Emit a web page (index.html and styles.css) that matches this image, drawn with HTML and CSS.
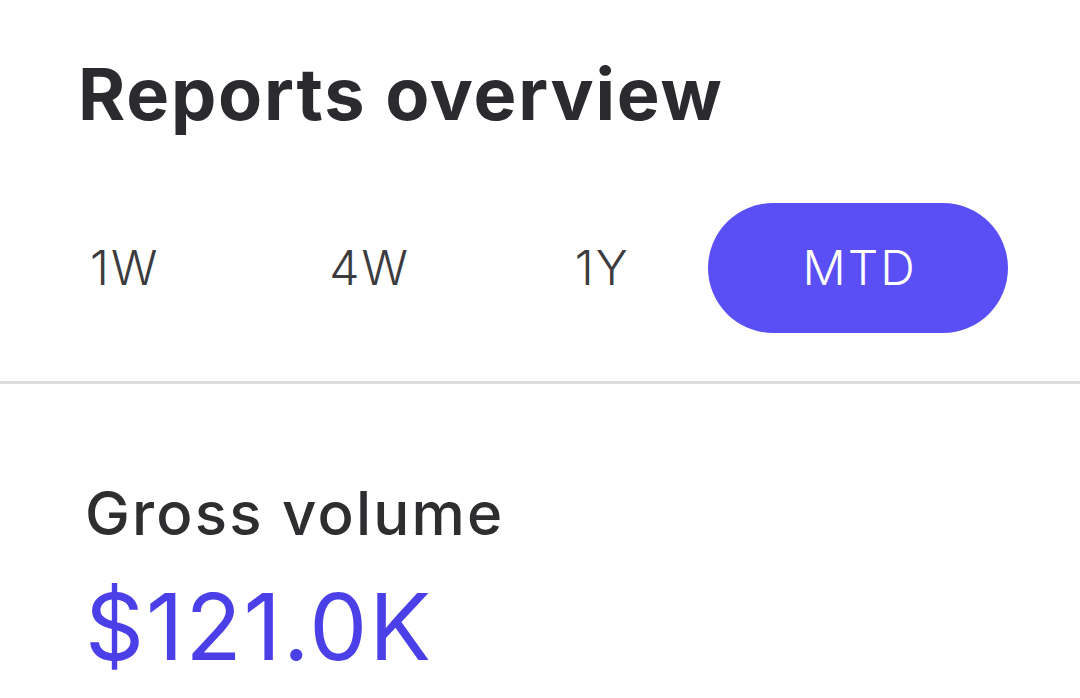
FILE: index.html
```html
<!DOCTYPE html>
<html lang="en">
<head>
<meta charset="utf-8">
<title>Reports overview</title>
<link rel="stylesheet" href="styles.css">
</head>
<body>
<div class="screen">
  <header class="header">
    <h1 class="title">Reports overview</h1>
    <nav class="tabs">
      <button class="tab">1W</button>
      <button class="tab tab-second">4W</button>
      <button class="tab tab-before-active">1Y</button>
      <button class="tab tab-active">MTD</button>
    </nav>
  </header>
  <section class="metric">
    <div class="metric-label">Gross volume</div>
    <div class="metric-value">$121.0K</div>
  </section>
</div>
</body>
</html>
```
FILE: styles.css
```css
* { box-sizing: border-box; }
html, body { margin: 0; padding: 0; background: #ffffff; }
body { font-family: Inter, "Noto Sans", sans-serif; overflow: hidden; }
.screen { width: 1080px; height: 698px; }
.header { border-bottom: 3px solid #dcdcdc; padding-top: 52px; padding-bottom: 48px; }
.title {
  margin: 0 0 0 78px;
  font-size: 72px;
  font-weight: 700;
  line-height: 84px;
  color: #2b2b2f;
  letter-spacing: 1.8px;
}
.tabs { display: flex; align-items: center; margin-top: 67px; }
.tab {
  font-family: Inter, "Noto Sans", sans-serif;
  font-size: 48px;
  font-weight: 300;
  color: #3c3c40;
  letter-spacing: 2px;
  background: none;
  border: none;
  height: 130px;
  padding: 0 85px;
  border-radius: 65px;
  line-height: 1;
}
.tab:first-child { padding-left: 90px; }
.tab-second { padding-right: 80px; }
.tab-before-active { padding-right: 78px; }
.tab-active { background: #5a4ff5; color: #ffffff; width: 300px; padding: 0 0 0 4px; }
.metric { padding: 93px 0 0 85px; }
.metric-label { font-size: 60px; font-weight: 500; color: #2e2e30; line-height: 72px; letter-spacing: 2.2px; }
.metric-value { font-size: 92px; font-weight: 400; color: #4b3fe8; line-height: 100px; margin-top: 28px; letter-spacing: 2px; }
```
